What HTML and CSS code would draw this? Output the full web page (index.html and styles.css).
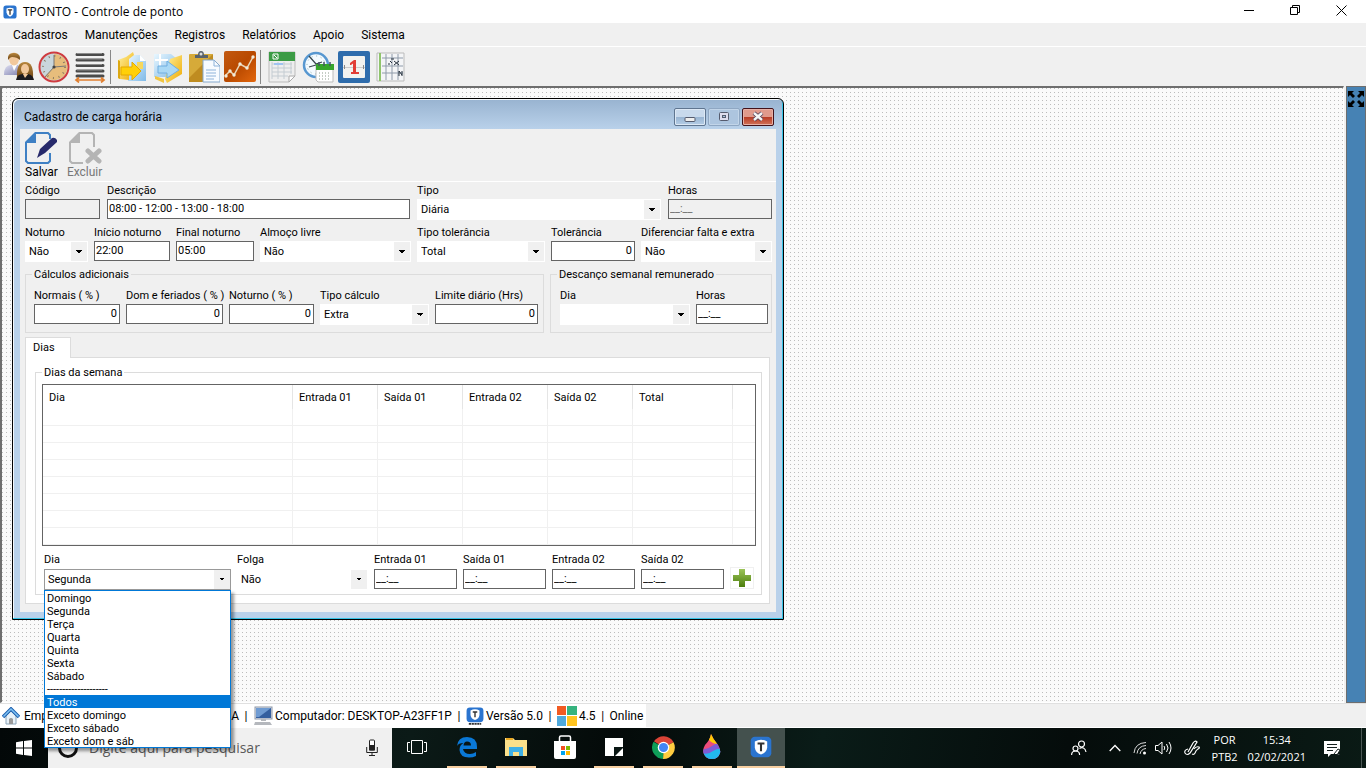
FILE: index.html
```html
<!DOCTYPE html>
<html lang="pt-BR">
<head>
<meta charset="utf-8">
<title>TPONTO - Controle de ponto</title>
<link rel="stylesheet" href="styles.css">
</head>
<body>
<header class="titlebar">
  <svg class="app-icon" viewBox="0 0 32 32"><rect x="1" y="1" width="30" height="30" rx="6" fill="#2a74cf"/><path d="M8 8q8-4 16 0v9q-1 7-8 10q-7-3-8-10z" fill="#fff"/><path d="M11 11h10M16 11v11" stroke="#333" stroke-width="3" fill="none"/></svg>
  <h1 class="app-title">TPONTO - Controle de ponto</h1>
  <div class="sys-buttons">
    <button class="sys-btn" aria-label="Minimizar"><svg width="10" height="10" viewBox="0 0 10 10"><path d="M0 5.5h10" stroke="#000"/></svg></button>
    <button class="sys-btn" aria-label="Restaurar"><svg width="10" height="10" viewBox="0 0 10 10"><path d="M.5 2.5h7v7h-7zM2.500 2.500v-2h7v7h-2" stroke="#000" fill="none"/></svg></button>
    <button class="sys-btn" aria-label="Fechar"><svg width="11" height="11" viewBox="0 0 11 11"><path d="M.5.5l10 10M10.500.5l-10 10" stroke="#000"/></svg></button>
  </div>
</header>

<nav class="menubar">
  <button>Cadastros</button><button>Manutenções</button><button>Registros</button><button>Relatórios</button><button>Apoio</button><button>Sistema</button>
</nav>

<div class="toolbar">
  <button aria-label="Funcionários"><svg viewBox="0 0 32 32"><defs><linearGradient id="hair" x2="0" y2="1"><stop stop-color="#b8863c"/><stop offset="1" stop-color="#6b4415"/></linearGradient><linearGradient id="shirt" x2="1" y2="1"><stop stop-color="#dfe0f2"/><stop offset="1" stop-color="#7d7fae"/></linearGradient></defs><path d="M2 24q0-10 7-10h7q4 3 4 10z" fill="url(#shirt)"/><path d="M10 14l2 6 3-6z" fill="#fff"/><ellipse cx="12" cy="8" rx="5" ry="6.500" fill="#f2c89c"/><path d="M6 9q-1-8 7-7q6 1 5 7q-3-3-8-3q-2 0-4 3" fill="url(#hair)"/><path d="M15 27q-1-16 8-16q9 0 8 16l-4 1h-9z" fill="url(#hair)"/><ellipse cx="23" cy="18" rx="4" ry="5" fill="#f2c89c"/><path d="M14 29q1-6 7-6l2 3 3-3q5 1 6 6z" fill="#1c1a1e"/><path d="M21 23l2 4 3-4z" fill="#f2c89c"/></svg></button>
  <button aria-label="Horários"><svg viewBox="0 0 32 32"><circle cx="16" cy="16" r="14.500" fill="#c9d6dc" stroke="#cf3b3f" stroke-width="2"/><path d="M16 16V3a13 13 0 1 1-9 22z" fill="#e7bd7c"/><circle cx="16" cy="16" r="11" fill="none" stroke="#8b7b62" stroke-width="2" stroke-dasharray="1 4.76"/><path d="M16 4v12M16 16L7 26M16 16l12-1" stroke="#777" stroke-width="1"/><circle cx="16" cy="16" r="1.600" fill="#444"/></svg></button>
  <button aria-label="Faixas"><svg viewBox="0 0 32 32"><path d="M3 3.500h26M3 9h26M3 14.500h26M3 20h26M3 25h26" stroke="#4a4a4a" stroke-width="3" stroke-linecap="round"/><path d="M3 2.500h25M3 8h25M3 13.500h25M3 19h25" stroke="#aaa" stroke-width=".7"/><path d="M3 29h26M5 26.500l-3 2.500 3 2.500M27 26.500l3 2.500-3 2.500" stroke="#df7f30" stroke-width="1.700" fill="none"/></svg></button>
  <span class="sep"></span>
  <button aria-label="Importar"><svg viewBox="0 0 32 32"><defs><linearGradient id="fold" x2="1" y2="1"><stop stop-color="#fff3a0"/><stop offset="1" stop-color="#efa900"/></linearGradient><linearGradient id="sheet" x2="1" y2="1"><stop stop-color="#e9f7ff"/><stop offset="1" stop-color="#7fbae8"/></linearGradient></defs><path d="M12 4h12l6 6v20H12z" fill="url(#sheet)"/><path d="M24 4v6h6z" fill="#fff"/><rect x="21" y="11" width="6" height="7" fill="#f6d75c"/><path d="M2 9l8-3 7-5 1 3-5 4v21l-9-1-2-1z" fill="url(#fold)"/><path d="M2 9l2 1v18l-2-1z" fill="#dca812"/><path d="M5 16h11v-5l9 9-9 9v-5H5z" fill="#ffd008" stroke="#e5a800"/></svg></button>
  <button aria-label="Exportar"><svg viewBox="0 0 32 32"><path d="M2 3h17l6 5v18H2z" fill="url(#sheet)"/><path d="M8 3v14M3 9h13" stroke="#fff" stroke-width="2"/><path d="M18 8l12-4v19l-15 9-2-4z" fill="url(#fold)"/><path d="M3 25l9 3v4l-9-4z" fill="#f1c541"/><path d="M6 15h9v-5l12 9-12 8v-5H6z" fill="#a9d8f5" stroke="#6eade0"/></svg></button>
  <button aria-label="Colar"><svg viewBox="0 0 32 32"><rect x="1" y="3" width="24" height="28" rx="1" fill="#d6aa39"/><path d="M1 27l24-24v28H1z" fill="#bf8c20"/><path d="M7 7V4h3q0-4 3-4t3 4h4v3z" fill="#58626c"/><circle cx="13" cy="3" r="1.500" fill="#ddd"/><path d="M15 9h11l6 6v16H15z" fill="#f7fbff" stroke="#85a8cc"/><path d="M26 9v6h6M18 19h10M18 22h10M18 25h10M18 28h8" fill="none" stroke="#8db2d9"/></svg></button>
  <button aria-label="Gráficos"><svg viewBox="0 0 32 32"><defs><linearGradient id="chart" x2="1" y2="1"><stop stop-color="#c35910"/><stop offset=".5" stop-color="#b84900"/><stop offset="1" stop-color="#e3670d"/></linearGradient></defs><rect width="32" height="31" rx="2" fill="url(#chart)"/><path d="M1 25l5-5 4 4 6-11 7 4 6-11" fill="none" stroke="#ead7b9" stroke-width="1.500"/><g fill="#f1ead9"><circle cx="2" cy="25" r="1.700"/><circle cx="6" cy="20" r="1.700"/><circle cx="10" cy="24" r="1.700"/><circle cx="16" cy="13" r="1.700"/><circle cx="23" cy="17" r="1.700"/><circle cx="29" cy="6" r="1.700"/></g></svg></button>
  <span class="sep"></span>
  <button aria-label="Planilha"><svg viewBox="0 0 32 32"><path d="M3 1h26v24l-6 6H3z" fill="#eee" stroke="#bbb"/><path d="M3 1h26v9H3z" fill="#3c9b45"/><path d="M7 3h5v5H7zM8 4l3 3" fill="none" stroke="#fff"/><path d="M6 13h20M6 17h20M6 21h20M6 25h16M6 11v17M12 11v17M18 11v17M25 11v12" stroke="#c4ccd2"/><path d="M8 12h9v2H8z" fill="#9fc3f0"/><path d="M23 31v-6h6z" fill="#fff" stroke="#aaa"/></svg></button>
  <button aria-label="Apuração"><svg viewBox="0 0 32 32"><circle cx="14" cy="14" r="12" fill="#f3faff" stroke="#5797d0" stroke-width="2.500"/><circle cx="14" cy="14" r="9" fill="none" stroke="#8aa" stroke-dasharray="1 3.700"/><path d="M7 5l7 8 6-2M14 14l-7 2" stroke="#37474f" fill="none" stroke-width="1.300"/><path d="M14 15h17v16H16l-2-2z" fill="#fff" stroke="#bbb"/><path d="M14 13h18v6H14z" fill="#36a52b"/><path d="M17 11v4M22 11v4M28 11v4" stroke="#456" stroke-width="1.500"/><path d="M17 22h12M17 25h12M17 28h10" stroke="#8a9a8a" stroke-dasharray="1 2"/></svg></button>
  <button aria-label="Calendário"><svg viewBox="0 0 32 32"><rect width="32" height="32" rx="2" fill="#2e6cac"/><rect x="5" y="5" width="22" height="22" rx="1" fill="#f2f2ef"/><path d="M5 16.500h22" stroke="#ccc"/><path d="M6.500 14v4M25.500 14v4" stroke="#888"/><path d="M12 12l4-3h2v12h3v2h-8v-2h2v-8.500l-2 1.500h-1z" fill="#e23d35"/></svg></button>
  <button aria-label="Escala"><svg viewBox="0 0 32 32"><path d="M3 2h27v28H3z" fill="#f4f5f7" stroke="#bbb"/><path d="M6 2v28" stroke="#8fc46b" stroke-width="2"/><path d="M8 7h21M8 15h21M8 22h21M12 3v26M18 3v26M24 3v26" stroke="#8f9baa"/><path d="M16 10l2 2M20 10l5 4M25 10l-5 4M17 8h3M14 13h2M25 20l3 4M28 20v5M25 20v5" stroke="#25303d"/></svg></button>
</div>

<main class="workspace">
  <div class="mdi">
    <section class="window">
      <header class="win-title">
        <h2>Cadastro de carga horária</h2>
        <div class="win-buttons">
          <button class="cap" aria-label="Minimizar janela"><svg width="12" height="12" viewBox="0 0 12 12"><rect x="1" y="6.500" width="10" height="4" rx="1" fill="#eee" stroke="#555b6e"/></svg></button>
          <button class="cap dim" aria-label="Maximizar janela"><svg width="12" height="12" viewBox="0 0 12 12"><rect x="1.500" y="1.500" width="9" height="8" rx="1" fill="#dde" stroke="#555b6e"/><rect x="4.500" y="4.500" width="3" height="2" fill="#a9c4e0" stroke="#555b6e"/></svg></button>
          <button class="cap close" aria-label="Fechar janela"><svg width="12" height="12" viewBox="0 0 12 12"><path d="M2 2l8 7M10 2l-8 7" stroke="#52435a" stroke-width="4.200"/><path d="M2 2l8 7M10 2l-8 7" stroke="#f5f5f5" stroke-width="2.400"/></svg></button>
        </div>
      </header>
      <div class="client">
        <div class="win-tools">
          <button><svg width="32" height="32" viewBox="0 0 32 32"><path d="M11 1h12l2 2v4M25 21v8l-2 2H3l-2-2V11" fill="none" stroke="#3e80c4" stroke-width="2"/><path d="M11 0v11H0v-1L10 0z" fill="#3e80c4"/><path d="M12 26l3-9L27 6q3-1 5 2v2L20 21l-5 3z" fill="#272a6b"/></svg><span>Salvar</span></button>
          <button disabled><svg width="34" height="32" viewBox="0 0 34 32"><path d="M12 1h12l2 2v12M15 31H4l-2-2V11" fill="none" stroke="#b4b4b4" stroke-width="2"/><path d="M12 0v11H1v-1L11 0z" fill="#b4b4b4"/><path d="M20 19l11 10M31 19L20 29" stroke="#b4b4b4" stroke-width="5" stroke-linecap="round"/></svg><span>Excluir</span></button>
        </div>
        <form class="form">
          <div class="row row-a">
            <div class="field"><label for="cod">Código</label><input id="cod" type="text" disabled></div>
            <div class="field"><label for="desc">Descrição</label><input id="desc" type="text" value="08:00 - 12:00 - 13:00 - 18:00"></div>
            <div class="field"><label for="tipo">Tipo</label><select id="tipo"><option>Diária</option></select></div>
            <div class="field"><label for="horas">Horas</label><input id="horas" type="text" value="__:__" disabled></div>
          </div>
          <div class="row row-b">
            <div class="field"><label for="not">Noturno</label><select id="not"><option>Não</option></select></div>
            <div class="field"><label for="ini">Início noturno</label><input id="ini" type="text" value="22:00"></div>
            <div class="field"><label for="fim">Final noturno</label><input id="fim" type="text" value="05:00"></div>
            <div class="field"><label for="alm">Almoço livre</label><select id="alm"><option>Não</option></select></div>
            <div class="field"><label for="ttol">Tipo tolerância</label><select id="ttol"><option>Total</option></select></div>
            <div class="field"><label for="tol">Tolerância</label><input id="tol" class="num" type="text" value="0"></div>
            <div class="field"><label for="dif">Diferenciar falta e extra</label><select id="dif"><option>Não</option></select></div>
          </div>
          <div class="groups">
            <fieldset><legend>Cálculos adicionais</legend>
              <div class="row row-c">
                <div class="field"><label for="norm">Normais ( % )</label><input id="norm" class="num" type="text" value="0"></div>
                <div class="field"><label for="dom">Dom e feriados ( % )</label><input id="dom" class="num" type="text" value="0"></div>
                <div class="field"><label for="notp">Noturno ( % )</label><input id="notp" class="num" type="text" value="0"></div>
                <div class="field"><label for="tcalc">Tipo cálculo</label><select id="tcalc"><option>Extra</option></select></div>
                <div class="field"><label for="lim">Limite diário (Hrs)</label><input id="lim" class="num" type="text" value="0"></div>
              </div>
            </fieldset>
            <fieldset><legend>Descanço semanal remunerado</legend>
              <div class="row row-d">
                <div class="field"><label for="ddia">Dia</label><select id="ddia"><option></option></select></div>
                <div class="field"><label for="dhoras">Horas</label><input id="dhoras" type="text" value="__:__"></div>
              </div>
            </fieldset>
          </div>
          <div class="tabs">
            <button type="button" class="tab">Dias</button>
            <div class="panel">
              <fieldset><legend>Dias da semana</legend>
                <div class="week">
                  <table class="grid">
                    <colgroup><col><col class="c-time"><col class="c-time"><col class="c-time"><col class="c-time"><col class="c-total"><col class="c-rest"></colgroup>
                    <thead><tr><th>Dia</th><th>Entrada 01</th><th>Saída 01</th><th>Entrada 02</th><th>Saída 02</th><th>Total</th><th></th></tr></thead>
                    <tbody>
                      <tr><td></td><td></td><td></td><td></td><td></td><td></td><td></td></tr>
                      <tr><td></td><td></td><td></td><td></td><td></td><td></td><td></td></tr>
                      <tr><td></td><td></td><td></td><td></td><td></td><td></td><td></td></tr>
                      <tr><td></td><td></td><td></td><td></td><td></td><td></td><td></td></tr>
                      <tr><td></td><td></td><td></td><td></td><td></td><td></td><td></td></tr>
                      <tr><td></td><td></td><td></td><td></td><td></td><td></td><td></td></tr>
                      <tr><td></td><td></td><td></td><td></td><td></td><td></td><td></td></tr>
                      <tr><td></td><td></td><td></td><td></td><td></td><td></td><td></td></tr>
                    </tbody>
                  </table>
                  <div class="row row-e">
                    <div class="field day"><label for="dia">Dia</label><select id="dia" class="open"><option>Segunda</option></select>
                      <ul class="popup" role="listbox" aria-label="Dia">
                        <li>Domingo</li><li>Segunda</li><li>Terça</li><li>Quarta</li><li>Quinta</li><li>Sexta</li><li>Sábado</li><li>--------------------</li><li class="hot">Todos</li><li>Exceto domingo</li><li>Exceto sábado</li><li>Exceto dom e sáb</li>
                      </ul>
                    </div>
                    <div class="field"><label for="folga">Folga</label><select id="folga"><option>Não</option></select></div>
                    <div class="field"><label for="e1">Entrada 01</label><input id="e1" type="text" value="__:__"></div>
                    <div class="field"><label for="s1">Saída 01</label><input id="s1" type="text" value="__:__"></div>
                    <div class="field"><label for="e2">Entrada 02</label><input id="e2" type="text" value="__:__"></div>
                    <div class="field"><label for="s2">Saída 02</label><input id="s2" type="text" value="__:__"></div>
                    <button type="button" class="add" aria-label="Adicionar"><svg width="18" height="18" viewBox="0 0 18 18"><defs><linearGradient id="plus" x2="0" y2="1"><stop stop-color="#9cc45a"/><stop offset="1" stop-color="#4b7d0c"/></linearGradient></defs><path d="M6 0h6v6h6v6h-6v6H6v-6H0V6h6z" fill="url(#plus)"/></svg></button>
                  </div>
                </div>
              </fieldset>
            </div>
          </div>
        </form>
      </div>
    </section>
  </div>
  <aside class="side">
    <button aria-label="Expandir"><svg width="18" height="18" viewBox="0 0 18 18"><path d="M1 1h6L5 3l3 3-2 2-3-3-2 2zM17 1v6l-2-2-3 3-2-2 3-3-2-2zM1 17v-6l2 2 3-3 2 2-3 3 2 2zM17 17h-6l2-2-3-3 2-2 3 3 2-2z" fill="#000"/></svg></button>
  </aside>
</main>

<footer class="status">
  <div class="status-items">
    <span class="company"><svg width="18" height="18" viewBox="0 0 18 18"><path d="M4 9l5-5 5 5v8H4z" fill="#e8f1f8" stroke="#8ba4b8"/><path d="M7 17v-5q2-2 4 0v5z" fill="#999"/><path d="M1 10l8-8 8 8" fill="none" stroke="#1d5fae" stroke-width="3.500"/><path d="M1.500 9.500L9 2l7.500 7.500" fill="none" stroke="#7fc3f5" stroke-width="1.500"/></svg><span>Emp</span><span class="company-end">A</span></span>
    <span class="bar">|</span>
    <svg width="20" height="20" viewBox="0 0 20 20"><rect x="2" y="1" width="17" height="12" fill="#dde2ea" stroke="#8d97a8"/><path d="M3 2h15v10H3z" fill="#345f9f"/><path d="M3 2h15L6 11H3z" fill="#6f9bd2"/><path d="M8 13h5v2H8zM2 16h15l2 3H1z" fill="#b5b8bd"/></svg>
    <span class="pc">Computador: DESKTOP-A23FF1P</span>
    <span class="bar">|</span>
    <svg width="18" height="18" viewBox="0 0 32 32"><rect x="1" y="1" width="30" height="26" rx="6" fill="#2a74cf"/><path d="M8 6q8-4 16 0v8q-1 7-8 9q-7-2-8-9z" fill="#fff"/><path d="M12 9h8M16 9v9" stroke="#333" stroke-width="2.500" fill="none"/><path d="M5 30h22" stroke="#333" stroke-width="3" stroke-dasharray="4 1"/></svg>
    <span class="ver">Versão 5.0</span>
    <span class="bar">|</span>
    <svg width="20" height="20" viewBox="0 0 20 20"><path d="M0 0h9v9H0z" fill="#f15a22"/><path d="M10 0h10v9H10z" fill="#36b37e"/><path d="M0 10h9v10H0z" fill="#4fa9dc"/><path d="M10 10h10v10H10z" fill="#ffc41f"/></svg>
    <span class="net">4.5</span>
    <span class="bar">|</span>
    <span class="online">Online</span>
  </div>
</footer>

<div class="taskbar">
  <button class="start" aria-label="Iniciar"><svg width="16" height="16" viewBox="0 0 16 16"><path d="M0 2.200L7 1v6.500H0zM8 .9L16 0v7.500H8zM0 8.500h7V15l-7-1.200zM8 8.500h8V16l-8-1.100z" fill="#fff"/></svg></button>
  <div class="search">
    <svg width="22" height="22" viewBox="0 0 22 22"><circle cx="11" cy="11" r="8.500" fill="none" stroke="#111" stroke-width="3"/></svg>
    <input type="text" aria-label="Pesquisar" placeholder="Digite aqui para pesquisar">
    <svg width="12" height="18" viewBox="0 0 12 18"><rect x="3.500" y="1" width="5" height="10" rx="1" fill="#fff" stroke="#222"/><path d="M3 6h6v5.500H3z" fill="#222"/><path d="M.7 8v5.500h10.600V8M6 13.500V17M3 16.500h6" fill="none" stroke="#222"/></svg>
  </div>
  <button class="app wide" aria-label="Visão de tarefas"><svg width="20" height="16" viewBox="0 0 20 16"><path d="M4.500 1.500h11v13h-11zM3 3.500H.5v9H3M17 3.500h2.500v9H17" fill="none" stroke="#fff"/></svg></button>
  <button class="app run" aria-label="Edge"><svg width="22" height="22" viewBox="0 0 22 22"><path d="M1 10Q2 1 11 1q10 0 10 10v2H7q1 5 7 5 3 0 6-2v4q-3 1.500-7 1.500Q4 21.500 3.500 14q0-5 4-7-5 0-6.500 3M7.500 9.500H15q0-4-4-4-3 0-3.500 4" fill="#0a78d6" fill-rule="evenodd"/></svg></button>
  <button class="app run" aria-label="Explorador"><svg width="22" height="20" viewBox="0 0 22 20"><path d="M0 1h8l2 2h12v16H0z" fill="#fbe08a"/><path d="M1 1h7v2H1z" fill="#e8a722"/><path d="M4 10h14v9h-4v-4H8v4H4z" fill="#3fb0e6"/></svg></button>
  <button class="app" aria-label="Loja"><svg width="24" height="24" viewBox="0 0 24 24"><path d="M6.500 7V2.500q0-1.500 1.500-1.500h8q1.500 0 1.500 1.500V7" fill="none" stroke="#fff" stroke-width="1.500"/><path d="M1 6h22v16q0 2-2 2H3q-2 0-2-2z" fill="#fff"/><path d="M8 11h4v4H8z" fill="#f25022"/><path d="M13 11h4v4h-4z" fill="#7fba00"/><path d="M8 16h4v4H8z" fill="#00a4ef"/><path d="M13 16h4v4h-4z" fill="#ffb900"/></svg></button>
  <button class="app run" aria-label="Notas"><svg width="18" height="18" viewBox="0 0 18 18"><path d="M0 0h18v18H0z" fill="#fff"/><path d="M9 18V9h9v1l-8 8z" fill="#0a1714"/></svg></button>
  <button class="app run" aria-label="Chrome"><svg width="23" height="23" viewBox="0 0 24 24"><path d="M12 12L2 5.500A12 12 0 0 1 22.500 6.500z" fill="#db4437"/><path d="M12 12l10.500-5.500A12 12 0 0 1 11.500 24z" fill="#ffcd40"/><path d="M12 12l-.5 12A12 12 0 0 1 1.600 6z" fill="#0f9d58"/><circle cx="12" cy="12" r="6" fill="#fff"/><circle cx="12" cy="12" r="4.700" fill="#4285f4"/></svg></button>
  <button class="app run" aria-label="Paint 3D"><svg width="20" height="26" viewBox="0 0 20 26"><defs><clipPath id="drop"><path d="M9 0q2 5 7 11 3 5 2 8-2 6-8 6t-8-5q-2-4 1-9 5-5 6-11z"/></clipPath></defs><g clip-path="url(#drop)"><path d="M0 0h20v26H0z" fill="#ed4c7c"/><path d="M6 0h8l2 10q-6 0-10-5z" fill="#ffcb05"/><path d="M0 15q5 1 10-3t10-2v15H0z" fill="#7f5bd5"/><path d="M0 19q6 2 11-2 5-3 9-2v11H0z" fill="#22b8ee"/></g></svg></button>
  <button class="app run active" aria-label="TPONTO"><svg width="22" height="22" viewBox="0 0 32 32"><rect x="1" y="1" width="30" height="30" rx="6" fill="#2a74cf"/><path d="M7 8q9-5 18 0v9q-1 7-9 10q-8-3-9-10z" fill="#fff"/><path d="M11 11h10M16 11v11" stroke="#333" stroke-width="3" fill="none"/></svg></button>
  <div class="tray">
    <svg width="16" height="16" viewBox="0 0 16 16"><g fill="none" stroke="#fff" stroke-width="1.200"><circle cx="10.500" cy="4" r="3"/><circle cx="4.500" cy="8.500" r="2.500"/><path d="M.6 15q0-4 4-4t4 4M8.500 8.500q2-1.500 4-.5 2 1 2.500 4"/></g></svg>
    <svg class="t-caret" width="12" height="8" viewBox="0 0 12 8"><path d="M.7 7L6 1.500 11.300 7" fill="none" stroke="#fff" stroke-width="1.300"/></svg>
    <svg class="t-wifi" width="14" height="14" viewBox="0 0 14 14"><g fill="none" stroke="#ddd"><path d="M1 12Q2 2 13 1.500M4 12.500Q5 5 13 4.500M7 13q1-5 6-5.500"/></g><circle cx="11.500" cy="12" r="1.500" fill="#fff"/></svg>
    <svg class="t-vol" width="17" height="14" viewBox="0 0 17 14"><path d="M.5 4.500H3l4-3.500v12L3 9.500H.5zM9 5q1.500 2 0 4M11.500 3q3 4 0 8M14 1q4 6 0 12" fill="none" stroke="#fff"/></svg>
    <svg class="t-pen" width="16" height="16" viewBox="0 0 16 16"><path d="M4 9q-4 1-3 4 2 3 5 0l7-11q-2-2-4 1L4 12M8 14q2 1 3-1 1-3 3-4 2-1 1-2-3-1-5 2" fill="none" stroke="#fff" stroke-width="1.200"/></svg>
    <span class="lang">POR<br>PTB2</span>
    <span class="clock">15:34<br>02/02/2021</span>
    <svg class="t-note" width="17" height="17" viewBox="0 0 17 17"><path d="M0 1h16v9l-5 4H7l-3 3v-3H0z" fill="#fff"/><path d="M3 4.500h10M3 7.500h10M3 10.500h6" stroke="#14201e"/><path d="M10 14l4-5 2 1-3 5q3 0 3-1" fill="#fff" stroke="#14201e"/></svg>
  </div>
</div>
</body>
</html>
```
FILE: styles.css
```css
* { box-sizing: border-box; }

body {
  margin: 0;
  height: 100vh;
  display: flex;
  flex-direction: column;
  overflow: hidden;
  background: #f0f0f0;
  color: #000;
  font: 12px/16px Roboto, "Open Sans", sans-serif;
}

button {
  margin: 0;
  padding: 0;
  border: 0;
  background: none;
  color: inherit;
  font: inherit;
}

svg { display: block; flex: none; }

h1, h2 { margin: 0; font-size: 12px; font-weight: 400; }

/* Title bar and menu */
.titlebar {
  display: flex;
  align-items: center;
  height: 23px;
  padding-left: 3px;
  background: #fff;
}
.app-title { font-family: "Open Sans", "Noto Sans", sans-serif; }
.app-icon { width: 14px; height: 14px; margin-right: 6px; }
.sys-buttons { display: flex; align-self: stretch; margin-left: auto; padding-right: 2px; }
.sys-btn { width: 46px; height: 20px; display: grid; place-items: center; }

.menubar {
  display: flex;
  gap: 17px;
  height: 24px;
  padding: 0 13px;
  border-bottom: 1px solid #fff;
}

.toolbar {
  display: flex;
  align-items: center;
  gap: 4px;
  height: 39px;
  padding-left: 2px;
}
.toolbar svg { width: 32px; height: 32px; }
.toolbar .sep { width: 2px; height: 34px; border-left: 1px solid #888; }

/* Workspace */
.workspace {
  position: relative;
  z-index: 1;
  flex: 1;
  display: flex;
  gap: 2px;
  min-height: 0;
}
.mdi {
  position: relative;
  flex: 1;
  border: 2px solid #6e6e6e;
  border-right: 1px solid #fff;
  border-bottom: 1px solid #fff;
  background: conic-gradient(from 270deg at 1px 1px, #bcbcbc 90deg, #fafafa 0) 0 0 / 4px 4px;
}
.side {
  width: 20px;
  border: 1px solid #6e6e6e;
  background: #4682b4;
}
.side button { padding: 3px 0 0; }

/* Child window */
.window {
  position: absolute;
  left: 10px;
  top: 10px;
  width: 772px;
  padding: 0 7px 7px;
  border: 1px solid #000;
  border-radius: 6px 6px 0 0;
  background: linear-gradient(#98b3d0, #b9d1ea 30px);
  box-shadow: inset -1px -1px #35c3e6, inset 1px 1px #f4f8fc;
}
.win-title {
  display: flex;
  align-items: center;
  justify-content: space-between;
  height: 30px;
  padding: 6px 2px 0 4px;
}
.win-buttons { display: flex; gap: 2px; }
.cap {
  display: grid;
  place-items: center;
  width: 32px;
  height: 18px;
  border: 1px solid #5f7590;
  border-radius: 2px;
  background: linear-gradient(#c8d9ec 50%, #98b4d2 50%, #b5cde6);
  box-shadow: inset 0 0 0 1px #dce8f5;
}
.cap.dim { border-color: #8fa7c3; background: #adc5df; box-shadow: inset 0 0 0 1px #c2d5e9; }
.cap.close {
  border-color: #43121a;
  background: linear-gradient(#e09a8c 50%, #b83a24 50%, #d0735a);
  box-shadow: inset 0 0 0 1px #e6b0a6;
}

.client { background: #f0f0f0; }
.win-tools {
  display: flex;
  gap: 9px;
  height: 53px;
  padding: 3px 5px 0;
  border-bottom: 1px solid #fff;
}
.win-tools button { display: flex; flex-direction: column; align-items: center; }
.win-tools button:disabled { color: #777; }

/* Form */
.form {
  display: flex;
  flex-direction: column;
  gap: 5px;
  padding: 1px 4px 8px 5px;
  font: 11px/14px Roboto, "Liberation Sans", sans-serif;
}
.row { display: grid; gap: 6px; align-items: start; }
.row-a { grid-template-columns: 75fr 303fr 244fr 104fr; gap: 7px; }
.row-b { grid-template-columns: 63fr 76fr 78fr 151fr 128fr 84fr 131fr; }
.row-c { grid-template-columns: 86fr 97fr 85fr 109fr 103fr; padding: 7px 5px 7px 8px; }
.row-d { grid-template-columns: 130fr 72fr; padding: 7px 3px 7px 9px; }
.row-e { grid-template-columns: 187fr 131fr 83fr 83fr 83fr 83fr 24fr; padding: 6px 2px 4px; }

.field { display: flex; flex-direction: column; gap: 2px; min-width: 0; white-space: nowrap; }
.row-e .field { gap: 3px; }
label, legend { height: 14px; line-height: 16px; }

input, select {
  width: 100%;
  min-width: 0;
  margin: 0;
  border-radius: 0;
  color: #000;
  font: inherit;
}
.field input {
  height: 20px;
  padding: 0 2px 2px 1px;
  border: 1px solid #646464;
  background: #fff;
}
.field input:disabled { background: #f0f0f0; color: #6d6d6d; }
.field .num { text-align: right; }

select {
  appearance: none;
  height: 21px;
  padding: 1px 20px 0 3px;
  border: 1px solid #fff;
  background:
    conic-gradient(from 315deg at 50% 100%, #000 90deg, transparent 0) right 5px top 8px / 6px 3px no-repeat,
    linear-gradient(#f0f0f0, #f0f0f0) right / 16px 100% no-repeat,
    #fff;
}
select.open { border-color: #999; }

fieldset {
  min-width: 0;
  margin: 0;
  padding: 0;
  border: 1px solid #dcdcdc;
}
legend { margin-left: 6px; padding: 0 2px; }
.groups { display: grid; grid-template-columns: 519fr 222fr; gap: 6px; }

.tabs { padding-right: 2px; margin-top: -1px; }
.tab {
  display: block;
  position: relative;
  width: 46px;
  height: 21px;
  margin-bottom: -1px;
  padding: 0 7px;
  border: 1px solid #dcdcdc;
  border-bottom: 0;
  background: #fff;
  text-align: left;
}
.panel {
  padding: 7px 7px 8px 9px;
  border: 1px solid #dcdcdc;
  background: #fff;
}
.week { padding: 5px 5px 0 6px; }

.grid {
  width: 100%;
  table-layout: fixed;
  border: 1px solid #646464;
  border-spacing: 0;
}
.c-time { width: 85px; }
.c-total { width: 100px; }
.c-rest { width: 22px; }
.grid th {
  height: 24px;
  padding: 2px 0 0 6px;
  border-right: 1px solid #e5e5e5;
  font-weight: 400;
  text-align: left;
}
.grid td {
  height: 17px;
  padding: 0;
  border-right: 1px solid #f0f0f0;
  border-bottom: 1px solid #f0f0f0;
}
.grid th:last-child, .grid td:last-child { border-right: 0; }

.add {
  display: grid;
  place-items: center;
  height: 22px;
  margin-top: 15px;
  border: 1px solid #f0f0f0;
}

.day { position: relative; }
.popup {
  position: absolute;
  top: 100%;
  left: 0;
  width: 100%;
  margin: 0;
  padding: 0;
  border: 1px solid #0078d7;
  background: #fff;
  box-shadow: 3px 3px 3px rgba(0, 0, 0, .4);
  list-style: none;
}
.popup li { height: 13px; padding-left: 2px; line-height: 15px; }
.popup .hot { background: #0078d7; color: #fff; }

/* Status bar */
.status {
  height: 25px;
  border-bottom: 1px solid #fff;
  border-top: 1px solid #e0e0e0;
}
.status-items {
  display: flex;
  align-items: center;
  width: max-content;
  height: 100%;
  padding: 0 3px 0 2px;
  background: #fff;
}
.company { display: flex; align-items: center; width: 237px; gap: 4px; }
.company-end { margin-left: auto; }
.bar { width: 14px; text-align: center; }
.pc { margin-left: 2px; }
.ver, .net { margin-left: 2px; }

/* Taskbar */
.taskbar {
  display: flex;
  height: 40px;
  background: linear-gradient(100deg, #030808, #0b1a17 30%, #040a09 45%, #0a1c18 60%, #050c0b 78%, #0a1a15);
  color: #fff;
}
.start { width: 48px; display: grid; place-items: center; }
.search {
  display: flex;
  align-items: center;
  width: 344px;
  padding: 0 14px 0 9px;
  background: #f0f0f0;
}
.search input {
  flex: 1;
  padding: 0 0 0 10px;
  border: 0;
  background: none;
  font: 14px/20px "Open Sans", "Noto Sans", sans-serif;
}
.search input::placeholder { color: #5a5a5a; opacity: 1; }
.app {
  display: grid;
  place-items: center;
  width: 48px;
  margin-right: 1px;
  border-bottom: 2px solid transparent;
}
.app.wide { width: 50px; }
.app.run { border-image: linear-gradient(to right, transparent 4px, #f7cfa0 4px, #f7cfa0 44px, transparent 44px) 0 0 2 0; }
.app.active { border-image: none; border-bottom-color: #f7cfa0; background: #44514e; }
.tray {
  display: flex;
  align-items: center;
  margin-left: auto;
  margin-right: 4px;
  padding-right: 20px;
  border-right: 1px solid #4b5754;
  font: 11px/17px "Open Sans", "Noto Sans", sans-serif;
  text-align: center;
}
.t-caret { margin-left: 22px; }
.t-wifi { margin-left: 12px; }
.t-vol { margin-left: 8px; }
.t-pen { margin-left: 12px; }
.lang { margin-left: 12px; }
.clock { margin-left: 10px; }
.t-note { margin-left: 18px; }
```
